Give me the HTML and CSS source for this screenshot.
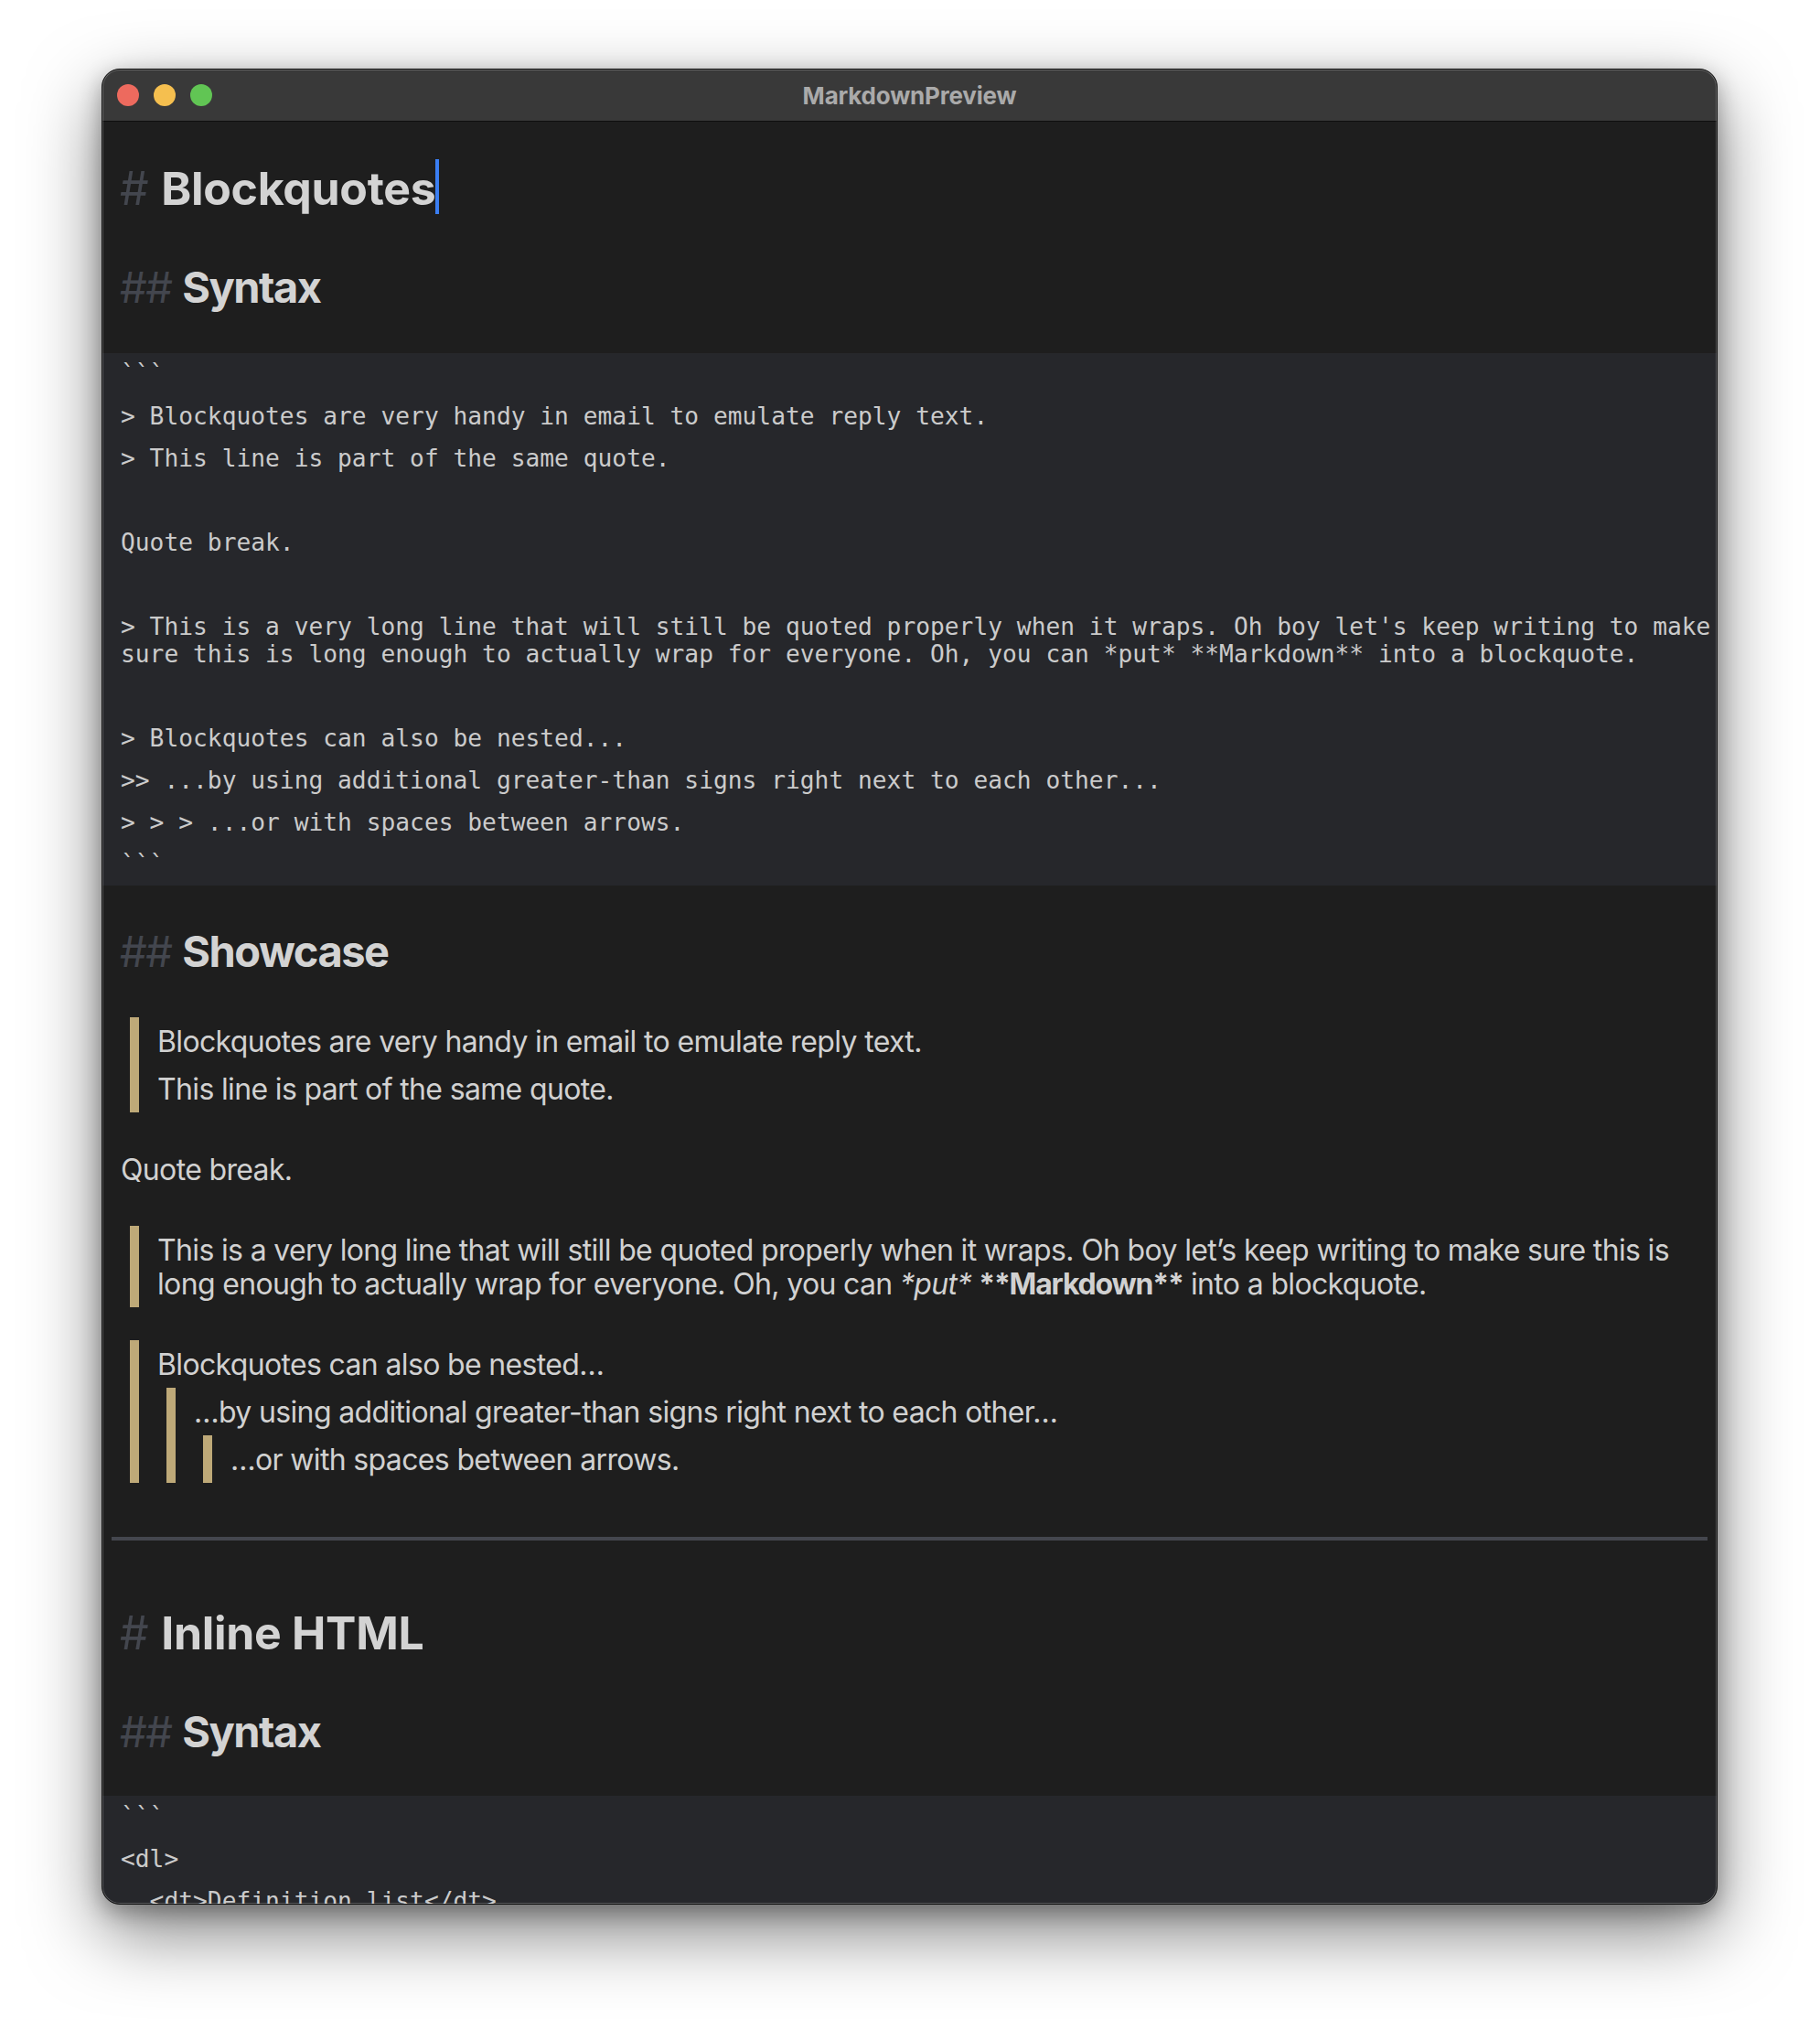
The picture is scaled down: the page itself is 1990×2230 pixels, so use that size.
FILE: index.html
```
<!DOCTYPE html>
<html lang="en">
<head>
<meta charset="utf-8">
<title>MarkdownPreview</title>
<link rel="stylesheet" href="styles.css">
</head>
<body>
<div class="window">
  <div class="titlebar">
    <div class="lights">
      <span class="light red"></span>
      <span class="light yellow"></span>
      <span class="light green"></span>
    </div>
    <div class="title">MarkdownPreview</div>
    <div class="spacer"></div>
  </div>
  <div class="content">
    <h1 class="h1 first"><span class="mark"># </span>Blockquotes<span class="caret"></span></h1>
    <h2 class="h2"><span class="mark">## </span>Syntax</h2>
    <div class="code">
      <div class="cl">```</div>
      <div class="cl">&gt; Blockquotes are very handy in email to emulate reply text.</div>
      <div class="cl">&gt; This line is part of the same quote.</div>
      <div class="cl"></div>
      <div class="cl">Quote break.</div>
      <div class="cl"></div>
      <div class="cl">&gt; This is a very long line that will still be quoted properly when it wraps. Oh boy let's keep writing to make<br>sure this is long enough to actually wrap for everyone. Oh, you can *put* **Markdown** into a blockquote.</div>
      <div class="cl"></div>
      <div class="cl">&gt; Blockquotes can also be nested...</div>
      <div class="cl">&gt;&gt; ...by using additional greater-than signs right next to each other...</div>
      <div class="cl">&gt; &gt; &gt; ...or with spaces between arrows.</div>
      <div class="cl">```</div>
    </div>
    <h2 class="h2 after-code"><span class="mark">## </span>Showcase</h2>
    <blockquote class="bq after-h2">
      <p class="p">Blockquotes are very handy in email to emulate reply text.</p>
      <p class="p">This line is part of the same quote.</p>
    </blockquote>
    <p class="p gap">Quote break.</p>
    <blockquote class="bq gap">
      <p class="p">This is a very long line that will still be quoted properly when it wraps. Oh boy let’s keep writing to make sure this is<br>long enough to actually wrap for everyone. Oh, you can <em>*put*</em> <strong>**Markdown**</strong> into a blockquote.</p>
    </blockquote>
    <blockquote class="bq gap">
      <p class="p">Blockquotes can also be nested…</p>
      <blockquote class="bq nested">
        <p class="p">…by using additional greater-than signs right next to each other…</p>
        <blockquote class="bq nested">
          <p class="p">…or with spaces between arrows.</p>
        </blockquote>
      </blockquote>
    </blockquote>
    <hr class="rule">
    <h1 class="h1 after-rule"><span class="mark"># </span>Inline HTML</h1>
    <h2 class="h2"><span class="mark">## </span>Syntax</h2>
    <div class="code code-last">
      <div class="cl">```</div>
      <div class="cl">&lt;dl&gt;</div>
      <div class="cl">  &lt;dt&gt;Definition list&lt;/dt&gt;</div>
      <div class="cl">  &lt;dd&gt;Is something people use sometimes.&lt;/dd&gt;</div>
    </div>
  </div>
</div>
</body>
</html>
```

FILE: styles.css
```
* { box-sizing: border-box; }

html, body {
  margin: 0;
  padding: 0;
}

body {
  width: 1990px;
  height: 2230px;
  overflow: hidden;
  background: #ffffff;
  font-family: Inter, "Noto Sans", sans-serif;
}

.window {
  position: relative;
  width: 1767px;
  height: 2007px;
  margin: 75px 0 0 111px;
  border: 1px solid #0d0d0d;
  border-radius: 20px;
  overflow: hidden;
  background: #1e1e1e;
  box-shadow: 0 30px 80px rgba(0, 0, 0, 0.5), 0 8px 24px rgba(0, 0, 0, 0.3);
}

.window::after {
  content: "";
  position: absolute;
  inset: 0;
  border-radius: 19px;
  box-shadow: inset 0 0 0 1px rgba(255, 255, 255, 0.24);
  pointer-events: none;
}

.titlebar {
  height: 57px;
  background: #393939;
  border-bottom: 1px solid #0f0f0f;
  display: grid;
  grid-template-columns: 1fr auto 1fr;
  align-items: center;
}

.lights {
  display: flex;
  gap: 16px;
  padding-left: 16px;
}

.light {
  width: 24px;
  height: 24px;
  border-radius: 50%;
  display: block;
}
.red { background: #ed6a5e; }
.yellow { background: #f5bf4f; }
.green { background: #61c554; }

.title {
  font-size: 26px;
  font-weight: 700;
  color: #aaaaaa;
  letter-spacing: -0.2px;
}

.content {
  color: #d1d1d1;
}

.h1, .h2 {
  margin: 0;
  padding-left: 19px;
  height: 60px;
  line-height: 60px;
  font-weight: 700;
  color: #d3d3d3;
  white-space: nowrap;
}

.h1 { font-size: 50px; letter-spacing: -0.3px; }
.h2 { font-size: 47px; letter-spacing: -1.5px; margin-top: 48px; }

.h1.first { margin-top: 43px; }
.h1.after-rule { margin-top: 71px; }
.h2.after-code { margin-top: 42px; }

.mark {
  color: #43464e;
  font-weight: 400;
}

.caret {
  display: inline-block;
  width: 4px;
  height: 60px;
  vertical-align: top;
  position: relative;
  top: -2px;
  background: #3a7ef2;
}

.code {
  margin-top: 42px;
  background: #26272b;
  padding: 0 20px;
  font-family: "DejaVu Sans Mono", "Liberation Mono", monospace;
  font-size: 26.25px;
  color: #cbcbcb;
}

.code-last { margin-top: 40px; }

.cl {
  padding: 8px 0;
  min-height: 46px;
  line-height: 30px;
  white-space: pre;
}

.p {
  margin: 0;
  padding: 8px 20px 7px 20px;
  font-size: 32px;
  line-height: 37px;
  letter-spacing: -0.65px;
  white-space: nowrap;
}

.p em { font-style: italic; }
.p strong { font-weight: 700; letter-spacing: -1.2px; }

.bq {
  margin: 0 0 0 30px;
  border-left: 10px solid #bea978;
}

.bq > .p { padding-left: 20px; }

.bq.after-h2 { margin-top: 42px; }
.gap { margin-top: 36px; }
.bq.gap { margin-top: 36px; }

.bq.nested {
  margin: 0 0 0 30px;
}

.rule {
  margin: 59px 10px 0 10px;
  height: 4px;
  border: 0;
  background: #44464e;
}
```
